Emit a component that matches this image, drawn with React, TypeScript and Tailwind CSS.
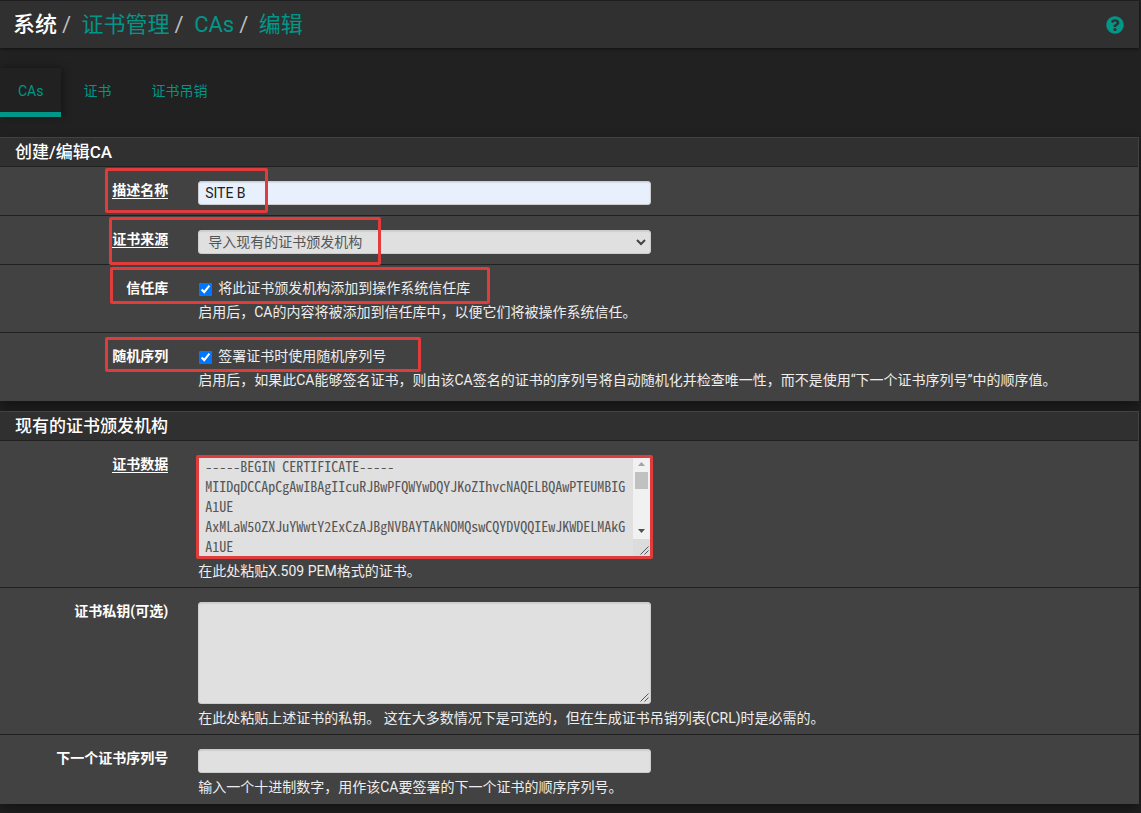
import React from 'react';
import { FaQuestionCircle } from 'react-icons/fa';

const CERTIFICATE = [
  '-----BEGIN CERTIFICATE-----',
  'MIIDqDCCApCgAwIBAgIIcuRJBwPFQWYwDQYJKoZIhvcNAQELBQAwPTEUMBIGA1UE',
  'AxMLaW50ZXJuYWwtY2ExCzAJBgNVBAYTAkNOMQswCQYDVQQIEwJKWDELMAkGA1UE',
].join('\n');

const crumbs = ['证书管理', 'CAs', '编辑'];
const tabs = ['CAs', '证书', '证书吊销'];

const fieldClass =
  'block w-full rounded-[3px] border border-[#ccc] text-sm shadow-[inset_0_1px_1px_rgba(0,0,0,0.08)] outline-none';

interface PanelProps {
  title: string;
  children: React.ReactNode;
}

function Panel({ title, children }: PanelProps) {
  return (
    <section className="mb-2.5 bg-[#424242] shadow-[0_6px_12px_rgba(0,0,0,0.4)]">
      <div className="border-t border-r border-[#424242]">
        <h2 className="border-b border-[#212121] bg-[#303030] pl-[15px] text-[17px] leading-7 font-medium text-white">
          {title}
        </h2>
      </div>
      {children}
    </section>
  );
}

interface FormRowProps {
  label: string;
  htmlFor: string;
  required?: boolean;
  help?: string;
  mark?: string;
  last?: boolean;
  children: React.ReactNode;
}

function FormRow({ label, htmlFor, required, help, mark, last, children }: FormRowProps) {
  return (
    <div className={`relative border-[#212121] ${last ? 'pb-px' : 'border-b'}`}>
      <div className="-mx-2.5 grid grid-cols-12 pt-3.5">
        <div className="col-span-2 px-[15px] text-right text-sm leading-[18px] font-bold text-white">
          <label htmlFor={htmlFor} className={required ? 'border-b border-white' : ''}>
            {label}
          </label>
        </div>
        <div className="col-span-5 px-[15px]">{children}</div>
        {help ? (
          <p className="col-span-10 col-start-3 mt-1 px-[15px] pb-1.5 text-sm leading-5">{help}</p>
        ) : (
          <div className="col-span-12 h-2.5" />
        )}
      </div>
      {mark && (
        <div className={`pointer-events-none absolute rounded-[2px] border-[3px] border-[#e03c3c] ${mark}`} />
      )}
    </div>
  );
}

interface CheckRowProps {
  label: string;
  id: string;
  text: string;
  help: string;
  mark: string;
  last?: boolean;
}

function CheckRow({ label, id, text, help, mark, last }: CheckRowProps) {
  return (
    <div className={`relative border-[#212121] ${last ? 'pb-px' : 'border-b'}`}>
      <div className="-mx-2.5 grid grid-cols-12 pt-3.5 pb-2.5">
        <div className="col-span-2 px-[15px] text-right text-sm leading-[18px] font-bold text-white">{label}</div>
        <div className="col-span-10 px-[15px]">
          <div className="flex items-start">
            <input id={id} type="checkbox" defaultChecked className="mt-1 mr-1.5 ml-px h-[13px] w-[13px]" />
            <label htmlFor={id} className="text-sm leading-[18px]">
              {text}
            </label>
          </div>
          <p className="mt-[5px] text-sm leading-5">{help}</p>
        </div>
      </div>
      <div className={`pointer-events-none absolute rounded-[2px] border-[3px] border-[#e03c3c] ${mark}`} />
    </div>
  );
}

function ResizeGrip() {
  return (
    <svg width="9" height="9" viewBox="0 0 9 9" stroke="#555" strokeWidth="1" className="pointer-events-none">
      <path d="M0.5 8.5L8.5 0.5M4.5 8.5L8.5 4.5" />
    </svg>
  );
}

export default function App() {
  return (
    <div className="min-h-screen bg-[#212121] pt-px pr-0.5 font-[Roboto,'Noto_Sans_CJK_SC',sans-serif] text-sm text-[#eee]">
      <header className="flex h-[47px] items-center justify-between bg-[#303030] pr-[15px] pl-[13px] shadow-[0_1px_3px_rgba(0,0,0,0.5)]">
        <ol className="flex text-[22px] leading-[30px]">
          <li className="font-medium text-white">系统</li>
          {crumbs.map((crumb) => (
            <li key={crumb} className="flex">
              <span className="px-[5px] text-[#bdbdbd]">/&nbsp;</span>
              <a href="#" className="text-[#009688]">
                {crumb}
              </a>
            </li>
          ))}
        </ol>
        <a href="#" aria-label="帮助">
          <FaQuestionCircle className="h-[18px] w-[18px] text-[#009688]" />
        </a>
      </header>

      <nav className="mt-5 mb-5 flex h-[49px] gap-1 leading-5">
        {tabs.map((tab, index) => (
          <a
            key={tab}
            href="#"
            className={`border-b-[5px] px-[18px] pt-[13px] text-[#009688] ${
              index === 0 ? 'border-[#009688] shadow-[2px_0_8px_rgba(0,0,0,0.4)]' : 'border-transparent'
            }`}
          >
            {tab}
          </a>
        ))}
      </nav>

      <form>
        <Panel title="创建/编辑CA">
          <FormRow label="描述名称" htmlFor="descr" required mark="top-px left-[105px] h-[45px] w-[163px]">
            <input
              id="descr"
              type="text"
              defaultValue="SITE B"
              className={`${fieldClass} h-6 bg-[#e8f0fe] px-1.5 text-[#212121]`}
            />
          </FormRow>
          <FormRow label="证书来源" htmlFor="method" required mark="top-px left-[109px] h-12 w-[272px]">
            <div className="relative">
              <select id="method" className={`${fieldClass} h-6 appearance-none bg-[#e0e0e0] pl-[9px] text-[#555]`}>
                <option>导入现有的证书颁发机构</option>
              </select>
              <svg
                width="10"
                height="7"
                viewBox="0 0 10 7"
                fill="none"
                stroke="#444"
                strokeWidth="2"
                className="pointer-events-none absolute top-[9px] right-[5px]"
              >
                <path d="M1 1L5 5L9 1" />
              </svg>
            </div>
          </FormRow>
          <CheckRow
            label="信任库"
            id="trust"
            text="将此证书颁发机构添加到操作系统信任库"
            help="启用后，CA的内容将被添加到信任库中，以便它们将被操作系统信任。"
            mark="top-0.5 left-[110px] h-[37px] w-[380px]"
          />
          <CheckRow
            label="随机序列"
            id="randomserial"
            text="签署证书时使用随机序列号"
            last
            help="启用后，如果此CA能够签名证书，则由该CA签名的证书的序列号将自动随机化并检查唯一性，而不是使用“下一个证书序列号”中的顺序值。"
            mark="top-1 left-[105px] h-[35px] w-[316px]"
          />
        </Panel>

        <Panel title="现有的证书颁发机构">
          <FormRow
            label="证书数据"
            htmlFor="cert"
            required
            help="在此处粘贴X.509 PEM格式的证书。"
            mark="top-3.5 left-[196px] h-[104px] w-[457px]"
          >
            <div className="flex h-[102px] overflow-hidden rounded-[3px] border border-[#ccc] bg-[#e0e0e0]">
              <textarea
                id="cert"
                defaultValue={CERTIFICATE}
                className="h-full min-w-0 flex-1 resize-none overflow-hidden bg-transparent px-1.5 font-['Noto_Sans_Mono_CJK_SC','Liberation_Mono',monospace] text-sm leading-5 break-all text-[#555] outline-none"
              />
              <div className="flex w-[17px] flex-col">
                <div className="flex flex-1 flex-col items-center bg-[#f1f1f1] pt-1.5 pb-1.5">
                  <svg width="7" height="4" viewBox="0 0 7 4" fill="#a3a3a3">
                    <path d="M3.5 0L7 4H0z" />
                  </svg>
                  <div className="mt-1.5 h-[17px] w-[13px] bg-[#c1c1c1]" />
                  <svg width="7" height="4" viewBox="0 0 7 4" fill="#505050" className="mt-auto">
                    <path d="M0 0H7L3.5 4z" />
                  </svg>
                </div>
                <div className="flex h-[17px] items-end justify-end bg-[#dcdcdc] pr-px pb-px">
                  <ResizeGrip />
                </div>
              </div>
            </div>
          </FormRow>
          <FormRow
            label="证书私钥(可选)"
            htmlFor="key"
            help="在此处粘贴上述证书的私钥。 这在大多数情况下是可选的，但在生成证书吊销列表(CRL)时是必需的。"
          >
            <div className="relative">
              <textarea
                id="key"
                className={`${fieldClass} h-[102px] resize-none bg-[#e0e0e0] px-1.5 text-[#555]`}
              />
              <div className="pointer-events-none absolute right-0.5 bottom-0.5">
                <ResizeGrip />
              </div>
            </div>
          </FormRow>
          <FormRow
            label="下一个证书序列号"
            htmlFor="serial"
            last
            help="输入一个十进制数字，用作该CA要签署的下一个证书的顺序序列号。"
          >
            <input id="serial" type="text" className={`${fieldClass} h-6 bg-[#e0e0e0] px-1.5 text-[#555]`} />
          </FormRow>
        </Panel>
      </form>
    </div>
  );
}
